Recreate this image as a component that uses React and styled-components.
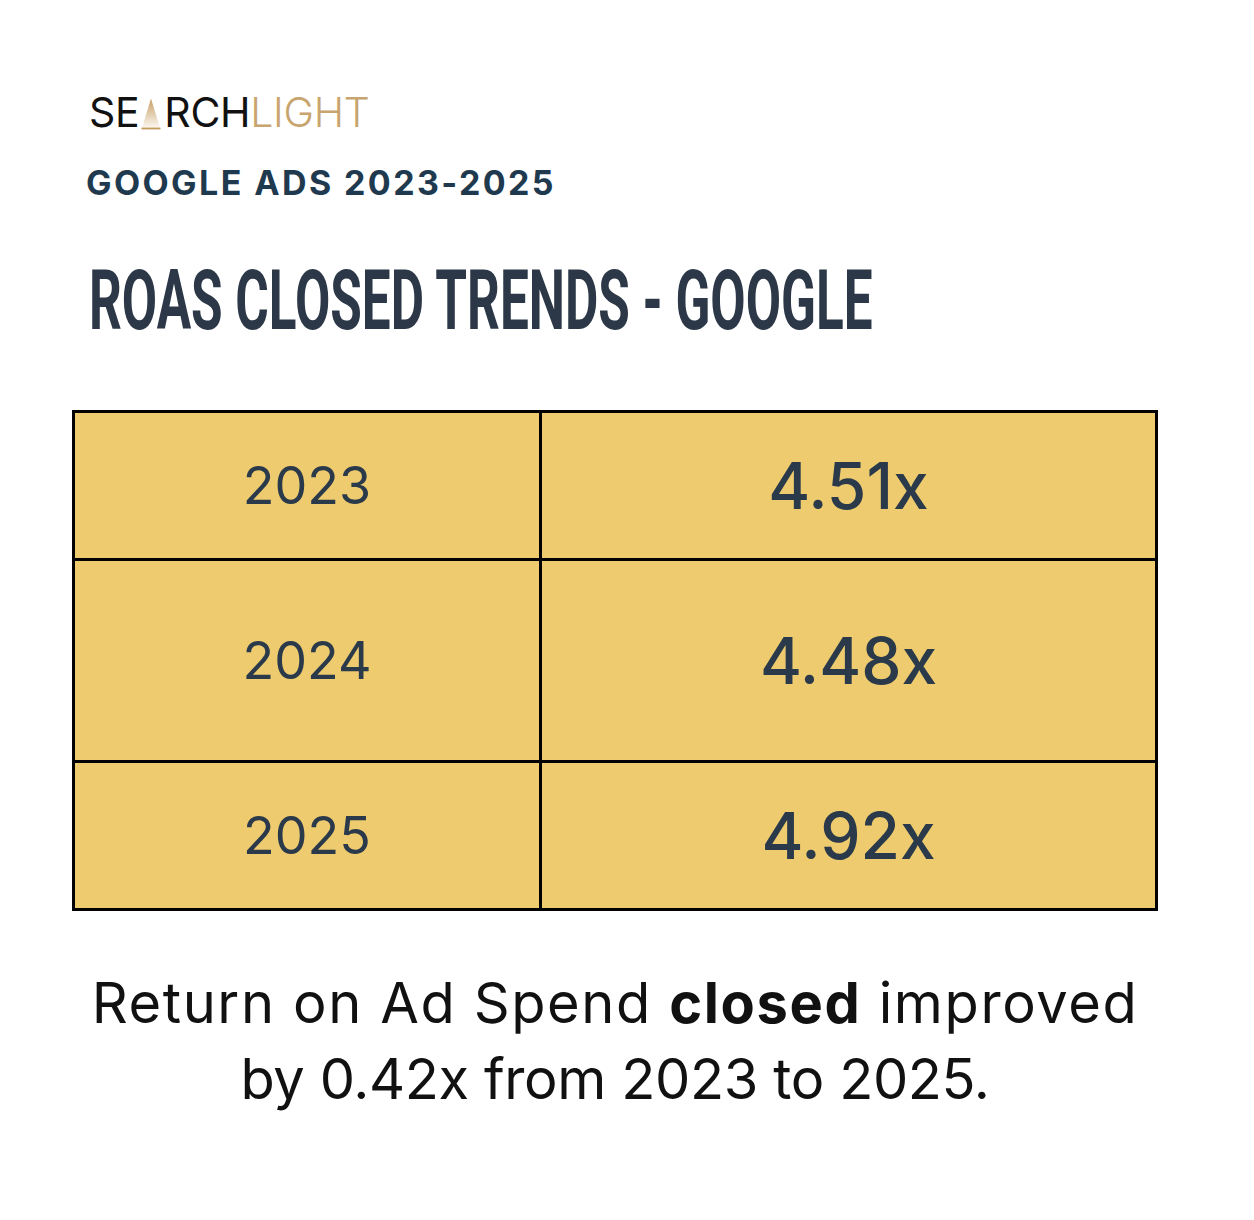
import React from "react";
import styled, { createGlobalStyle } from "styled-components";

const GlobalStyle = createGlobalStyle`
  html, body {
    margin: 0;
    padding: 0;
    background: #ffffff;
  }
  body {
    font-family: Inter, "Open Sans", sans-serif;
  }
`;

const rows = [
  { year: "2023", value: "4.51x", height: 148 },
  { year: "2024", value: "4.48x", height: 202 },
  { year: "2025", value: "4.92x", height: 148 },
];

function Beam() {
  return (
    <svg width="20" height="32" viewBox="0 0 20 32" aria-hidden="true">
      <defs>
        <linearGradient id="beam" x1="0" y1="0" x2="0" y2="1">
          <stop offset="0" stopColor="#c59d62" />
          <stop offset="1" stopColor="#fcf8f1" />
        </linearGradient>
      </defs>
      <polygon points="10,0.5 19,30 1,30" fill="url(#beam)" />
      <rect x="0.5" y="29.6" width="19" height="1.8" fill="#c49a5e" />
    </svg>
  );
}

export default function App() {
  return (
    <>
      <GlobalStyle />
      <Page>
        <Header>
          <Logo>
            <span>SE</span>
            <BeamSlot>
              <Beam />
            </BeamSlot>
            <span>RCH</span>
            <Light>LIGHT</Light>
          </Logo>
          <Subtitle>GOOGLE ADS 2023-2025</Subtitle>
          <Title>ROAS CLOSED TRENDS - GOOGLE</Title>
        </Header>

        <Table>
          <tbody>
            {rows.map(({ year, value, height }) => (
              <Row key={year} $height={height}>
                <YearCell>{year}</YearCell>
                <ValueCell>{value}</ValueCell>
              </Row>
            ))}
          </tbody>
        </Table>

        <Summary>
          <Line $spacing={1.6}>
            Return on Ad Spend <strong>closed</strong> improved
          </Line>
          <Line $spacing={-0.4}>by 0.42x from 2023 to 2025.</Line>
        </Summary>
      </Page>
    </>
  );
}

const Page = styled.main`
  width: 1254px;
  min-height: 1220px;
  box-sizing: border-box;
  padding: 92px 96px 0 72px;
  color: #2b3a4a;
`;

const Header = styled.header`
  display: flex;
  flex-direction: column;
  align-items: flex-start;
  padding-left: 17px;
`;

const Logo = styled.div`
  display: flex;
  align-items: flex-end;
  font-family: Inter, sans-serif;
  font-weight: 400;
  font-size: 41px;
  line-height: 40px;
  letter-spacing: -0.3px;
  color: #111111;
`;

const BeamSlot = styled.span`
  display: flex;
  align-items: flex-end;
  margin: 0 3px 2px 2px;
`;

const Light = styled.span`
  color: #c8a46e;
  font-weight: 300;
`;

const Subtitle = styled.h2`
  margin: 31px 0 0 -3px;
  font-family: Inter, sans-serif;
  font-weight: 700;
  font-size: 34px;
  line-height: 40px;
  letter-spacing: 2.4px;
  color: #1f3a4f;
`;

const Title = styled.h1`
  margin: 56px 0 0 0;
  font-family: Roboto, sans-serif;
  font-weight: 700;
  font-size: 84px;
  line-height: 84px;
  color: #2c3847;
  white-space: nowrap;
  transform: scaleX(0.61);
  transform-origin: left center;
`;

const Table = styled.table`
  margin-top: 67px;
  width: 1086px;
  border-collapse: collapse;
  background: #edcb6e;
`;

const Row = styled.tr`
  height: ${(p) => p.$height}px;
`;

const Cell = styled.td`
  border: 3px solid #000000;
  text-align: center;
  vertical-align: middle;
  padding: 0;
  color: #2b3a4a;
`;

const YearCell = styled(Cell)`
  width: 464px;
  font-size: 52px;
  font-weight: 400;
`;

const ValueCell = styled(Cell)`
  font-size: 64px;
  font-weight: 500;
`;

const Summary = styled.div`
  width: 1086px;
  margin-top: 54px;
  display: flex;
  flex-direction: column;
  align-items: center;
  font-size: 56px;
  line-height: 76px;
  font-weight: 400;
  color: #111111;
`;

const Line = styled.p`
  margin: 0;
  white-space: nowrap;
  letter-spacing: ${(p) => p.$spacing}px;

  strong {
    font-weight: 700;
  }
`;
